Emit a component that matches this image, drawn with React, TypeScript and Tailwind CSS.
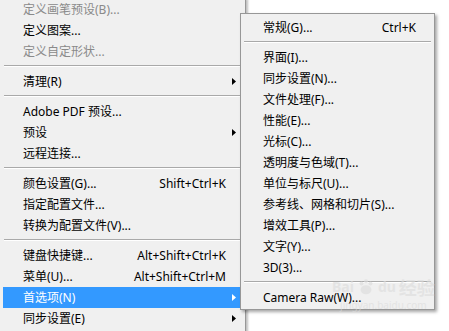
type Item =
  | { sep: true }
  | { sep?: false; label: string; shortcut?: string; sub?: boolean; disabled?: boolean; active?: boolean }

const mainItems: Item[] = [
  { label: "定义画笔预设(B)...", disabled: true },
  { label: "定义图案..." },
  { label: "定义自定形状...", disabled: true },
  { sep: true },
  { label: "清理(R)", sub: true },
  { sep: true },
  { label: "Adobe PDF 预设..." },
  { label: "预设", sub: true },
  { label: "远程连接..." },
  { sep: true },
  { label: "颜色设置(G)...", shortcut: "Shift+Ctrl+K" },
  { label: "指定配置文件..." },
  { label: "转换为配置文件(V)..." },
  { sep: true },
  { label: "键盘快捷键...", shortcut: "Alt+Shift+Ctrl+K" },
  { label: "菜单(U)...", shortcut: "Alt+Shift+Ctrl+M" },
  { label: "首选项(N)", sub: true, active: true },
  { label: "同步设置(E)", sub: true },
]

const prefItems: Item[] = [
  { label: "常规(G)...", shortcut: "Ctrl+K" },
  { sep: true },
  { label: "界面(I)..." },
  { label: "同步设置(N)..." },
  { label: "文件处理(F)..." },
  { label: "性能(E)..." },
  { label: "光标(C)..." },
  { label: "透明度与色域(T)..." },
  { label: "单位与标尺(U)..." },
  { label: "参考线、网格和切片(S)..." },
  { label: "增效工具(P)..." },
  { label: "文字(Y)..." },
  { label: "3D(3)..." },
  { sep: true },
  { label: "Camera Raw(W)..." },
]

const Arrow = ({ color }: { color: string }) => (
  <svg width="4" height="7" viewBox="0 0 4 7">
    <path d="M0 0 L4 3.5 L0 7 Z" fill={color} />
  </svg>
)

const MenuList = ({ items }: { items: Item[] }) => (
  <>
    {items.map((item, index) =>
      item.sep ? (
        <div key={index} className="h-[9px] pt-[3px] px-[1px]">
          <div className="border-t border-b border-t-[#a9a9a9] border-b-white" />
        </div>
      ) : (
        <div
          key={index}
          className={
            "flex items-center h-[21px] pl-[20px] whitespace-nowrap " +
            (item.active ? "bg-[#3399ff] text-white" : item.disabled ? "text-[#8a8a8a]" : "text-black")
          }
        >
          <span className="flex-1">{item.label}</span>
          {item.shortcut ? <span>{item.shortcut}</span> : null}
          <span className="w-[16px] pl-[6px] flex items-center">
            {item.sub ? <Arrow color={item.active ? "#ffffff" : "#000000"} /> : null}
          </span>
        </div>
      )
    )}
  </>
)

const App = () => {
  return (
    <div
      className="relative w-[449px] h-[331px] overflow-hidden bg-white text-[12px] leading-none"
      style={{ fontFamily: '"Noto Sans", "Noto Sans CJK SC", sans-serif' }}
    >
      <div className="w-[246px] h-[340px] -mt-px bg-[#f0f0f0] border-r border-r-[#979797] px-[3px] shadow-[2px_0_2px_rgba(0,0,0,0.25)]">
        <MenuList items={mainItems} />
      </div>

      <div className="absolute left-[240px] top-[13px] w-[195px] bg-[#f0f0f0] border border-[#979797] px-[2px] pt-[3px] pb-[1px] shadow-[2px_2px_3px_rgba(0,0,0,0.35)]">
        <MenuList items={prefItems} />
      </div>

      <div className="absolute left-[332px] top-[278px] flex flex-col items-center whitespace-nowrap text-[#dcdcdc] opacity-60 pointer-events-none">
        <div className="flex items-center gap-[3px] font-bold">
          <span className="text-[14px]">Bai</span>
          <svg width="18" height="18" viewBox="0 0 20 20">
            <circle cx="5" cy="6" r="2.2" fill="#dcdcdc" />
            <circle cx="10" cy="3.5" r="2.2" fill="#dcdcdc" />
            <circle cx="15" cy="6" r="2.2" fill="#dcdcdc" />
            <ellipse cx="10" cy="13" rx="6" ry="5" fill="#dcdcdc" />
          </svg>
          <span className="text-[14px]">du</span>
          <span className="text-[18px]" style={{ fontFamily: '"Noto Sans CJK SC", sans-serif' }}>经验</span>
        </div>
        <span className="text-[10px] mt-[4px]">jingyan.baidu.com</span>
      </div>
    </div>
  )
}

export default App
